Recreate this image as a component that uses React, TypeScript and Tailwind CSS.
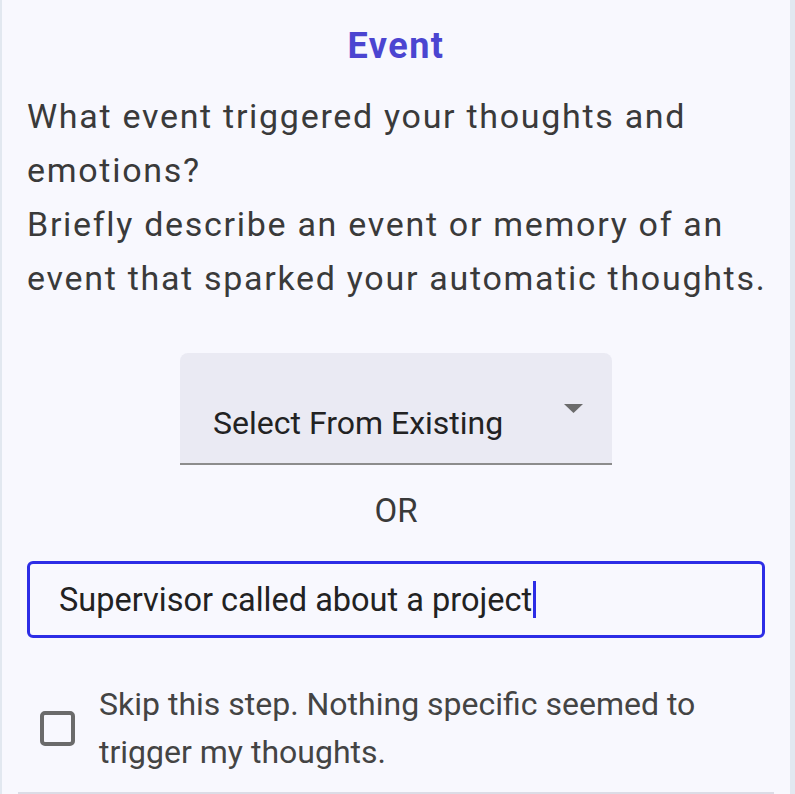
export default function App() {
  return (
    <div className="min-h-screen bg-[#e2e8f0] pl-[2px] pr-[5px]" style={{ fontFamily: "Roboto, 'Liberation Sans', sans-serif" }}>
      <div className="h-[794px] overflow-hidden bg-[#f8f8fe] flex flex-col">
        <h2 className="shrink-0 mt-[23px] text-center text-[36px] leading-[46px] font-bold tracking-[1.5px] text-[#4b45d1]">Event</h2>
        <div className="shrink-0 mt-[20px] pl-[25px] pr-[8px] text-[34px] leading-[54px] tracking-[1.7px] text-[#3a3a3a]">
          <p>What event triggered your thoughts and emotions?</p>
          <p>Briefly describe an event or memory of an event that sparked your automatic thoughts.</p>
        </div>

        <div className="shrink-0 mt-[48px] flex justify-center">
          <div className="relative w-[432px] h-[112px] rounded-t-[8px] bg-[#eaeaf3] border-b-2 border-[#8c8c8c] flex items-end pb-[20px] pl-[33px]">
            <span className="text-[32px] leading-[40px] text-[#222]">Select From Existing</span>
            <svg className="absolute right-[29px] top-[51px]" width="19" height="9" viewBox="0 0 19 9">
              <path d="M0 0 L19 0 L9.5 9 Z" fill="#6b6b6b" />
            </svg>
          </div>
        </div>

        <p className="shrink-0 mt-[26px] text-center text-[33px] leading-[40px] text-[#3a3a3a]">OR</p>

        <div className="shrink-0 mt-[30px] mx-[25px] h-[77px] rounded-[6px] border-[3px] border-[#2d2de6] flex items-center pl-[29px]">
          <span className="text-[32.5px] leading-[40px] text-[#222]">Supervisor called about a project</span>
          <span className="ml-[1px] w-[3px] h-[37px] bg-[#2d2de6]" />
        </div>

        <div className="shrink-0 mt-[42px] flex items-center pl-[38px]">
          <span className="shrink-0 w-[35px] h-[35px] rounded-[5px] border-[4px] border-[#6b6b6b]" />
          <span className="ml-[24px] w-[640px] text-[32px] leading-[48px] text-[#444]">Skip this step. Nothing specific seemed to trigger my thoughts.</span>
        </div>

        <div className="mt-auto mx-[16px] h-[2px] shrink-0 bg-[#dcdce6]" />
      </div>
    </div>
  )
}
